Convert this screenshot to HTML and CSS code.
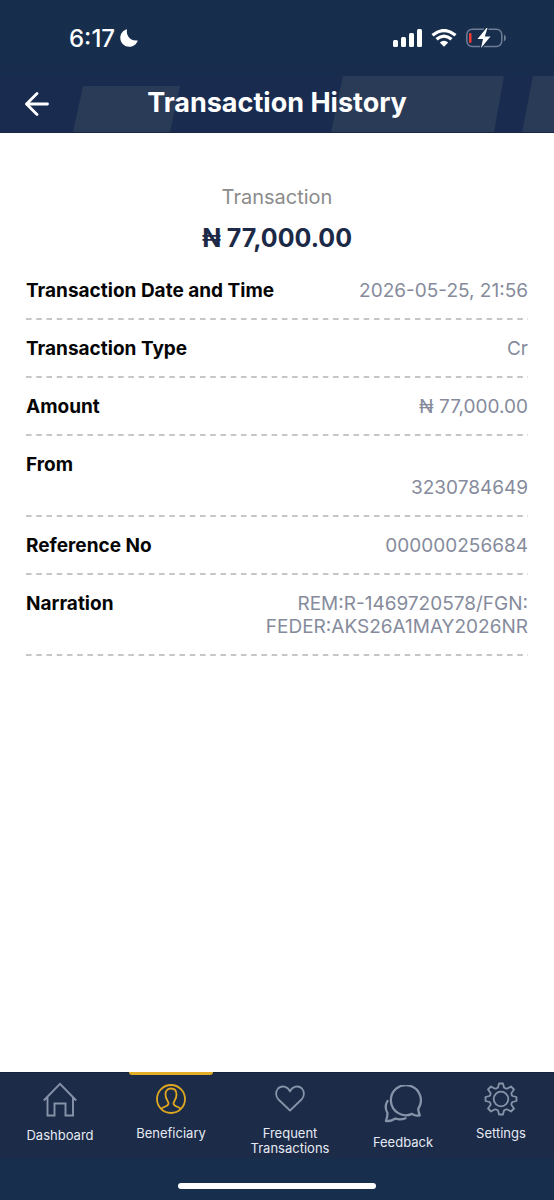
FILE: index.html
```html
<!DOCTYPE html>
<html lang="en">
<head>
<meta charset="utf-8">
<meta name="viewport" content="width=device-width, initial-scale=1">
<title>Transaction History</title>
<link rel="stylesheet" href="styles.css">
</head>
<body>
<div class="status">
  <div class="clock">
    <span>6:17</span>
    <svg width="18" height="18" viewBox="0 0 18 18" aria-hidden="true"><path fill="#fff" d="M7 .3C6 5.8 9.200 12.500 17.800 11.500C16.500 15.300 13.500 17.800 9.500 17.800C4.500 17.800.3 14 .3 9C.3 4.800 3 1.300 7 .3Z"/></svg>
  </div>
  <div class="signals">
    <svg width="29" height="18" viewBox="0 0 29 18" fill="#fff" aria-hidden="true"><rect y="11" width="5" height="7" rx="1.500"/><rect x="8" y="8" width="5" height="10" rx="1.500"/><rect x="16" y="4" width="5" height="14" rx="1.500"/><rect x="24" width="5" height="18" rx="1.500"/></svg>
    <svg width="26" height="18" viewBox="0 0 26 18" fill="none" stroke="#fff" stroke-width="3.200" aria-hidden="true"><path d="M1.500 6.300Q13-3.300 24.500 6.300M5.500 10.300Q13 3.800 20.500 10.300"/><path fill="#fff" stroke="none" d="M8.800 13.500Q13 10.200 17.200 13.500L13 17.700Z"/></svg>
    <svg width="40" height="20" viewBox="0 0 40 20" aria-hidden="true"><rect x=".8" y="1.200" width="35" height="17.400" rx="5.500" fill="none" stroke="#6f7e95" stroke-width="1.500"/><path d="M38 6.500q2 1 2 3.500t-2 3.500z" fill="#6f7e95"/><rect x="3" y="5" width="2.500" height="10" rx="1" fill="#ef3b36"/><path d="M20.500 0L11.500 11H17L15 20L24.500 8.500H18.800L21.500 0Z" fill="#fff" stroke="#172e4d" stroke-width="2.500" paint-order="stroke"/></svg>
  </div>
</div>
<header class="header">
  <svg class="pattern" viewBox="0 0 554 56" preserveAspectRatio="none" aria-hidden="true"><path fill="#2a3b58" d="M83 10H180L170 56H73ZM343 0H504L494 56H331ZM533 0H554V56H522Z"/></svg>
  <button class="back" aria-label="Back"><svg width="24" height="24" viewBox="0 0 24 24" fill="none" stroke="#fff" stroke-width="2.800" stroke-linecap="round" stroke-linejoin="round" aria-hidden="true"><path d="M22.500 12H1.500M12 1.500L1.500 12L12 22.500"/></svg></button>
  <h1 class="title">Transaction History</h1>
</header>
<main class="main">
  <p class="caption">Transaction</p>
  <p class="total">₦ 77,000.00</p>
  <dl class="details">
    <div class="row"><dt>Transaction Date and Time</dt><dd>2026-05-25, 21:56</dd></div>
    <div class="row"><dt>Transaction Type</dt><dd>Cr</dd></div>
    <div class="row"><dt>Amount</dt><dd>₦ 77,000.00</dd></div>
    <div class="row"><dt>From</dt><dd><br>3230784649</dd></div>
    <div class="row"><dt>Reference No</dt><dd>000000256684</dd></div>
    <div class="row"><dt>Narration</dt><dd>REM:R-1469720578/FGN:<br>FEDER:AKS26A1MAY2026NR</dd></div>
  </dl>
</main>
<footer class="footer">
  <nav class="tabs">
    <a class="tab" href="#dashboard"><svg width="34" height="36" viewBox="0 0 34 36" fill="none" stroke="#8693a8" stroke-width="1.900" aria-hidden="true"><path d="M.8 18.500L17 1.800L33.200 18.500M4.500 15V33.500H11.500V21.500H22.500V33.500H30V15"/></svg><span>Dashboard</span></a>
    <a class="tab active" href="#beneficiary" aria-current="page"><svg width="30" height="34" viewBox="0 0 30 34" fill="none" stroke="#e0a821" stroke-width="1.800" aria-hidden="true"><circle cx="15" cy="17" r="14"/><path d="M5 27C7 24.500 12.500 24.500 12.500 21.500C12.500 19 9.500 18 9.500 12.500C9.500 8.500 11.500 6.500 15 6.500S20.500 8.500 20.500 12.500C20.500 18 17.500 19 17.500 21.500C17.500 24.500 23 24.500 25 27"/></svg><span>Beneficiary</span></a>
    <a class="tab" href="#frequent"><svg width="30" height="34" viewBox="0 0 30 34" fill="none" stroke="#8693a8" stroke-width="1.800" stroke-linejoin="round" aria-hidden="true"><path d="M15 28.500L3.500 17.500C.5 14.500.3 9.500 3 6.500C6.500 3.200 12.500 4 15 9.500C17.500 4 23.500 3.200 27 6.500C29.700 9.500 29.500 14.500 26.500 17.500Z"/></svg><span>Frequent<br>Transactions</span></a>
    <a class="tab large" href="#feedback"><svg width="38" height="38" viewBox="0 0 38 38" fill="none" stroke="#8693a8" stroke-width="2.300" stroke-linecap="round" stroke-linejoin="round" aria-hidden="true"><path d="M34.300 23.600A15 15 0 1 0 28 28.900C30.500 30.500 33 31 35.800 30.300C35.300 28.500 34 26 34.300 23.600ZM3.500 16C1 20 1.200 24 3.500 28Q3.500 32 2 36Q7 36.500 11.500 33.500Q16 35.500 21.500 33.200"/></svg><span>Feedback</span></a>
    <a class="tab" href="#settings"><svg width="34" height="34" viewBox="0 0 34 34" fill="none" stroke="#8693a8" stroke-width="1.800" stroke-linejoin="round" aria-hidden="true"><circle cx="17" cy="17" r="7.300"/><path d="M15 1.500H19L20 5.500Q22 7 23.500 6.500L27 4.500L30 7.500L27.500 11Q27 12.500 28.500 14L32.500 15V19L28.500 20Q27 21.500 27.500 23L30 26.500L27 29.500L23.500 27.500Q22 27 20 28.500L19 32.500H15L14 28.500Q12 27 10.500 27.500L7 29.500L4 26.500L6.500 23Q7 21.500 5.500 20L1.500 19V15L5.500 14Q7 12.500 6.500 11L4 7.500L7 4.500L10.500 6.500Q12 7 14 5.500Z"/></svg><span>Settings</span></a>
  </nav>
  <div class="home"></div>
</footer>
</body>
</html>
```
FILE: styles.css
```css
* { box-sizing: border-box; }

body {
  margin: 0;
  min-height: 100vh;
  display: flex;
  flex-direction: column;
  background: #fff;
  font-family: Inter, "Liberation Sans", sans-serif;
}

.status {
  display: flex;
  justify-content: space-between;
  padding: 26px 48px 26px 69px;
  background: linear-gradient(#162e4c, #182d4e);
}

.clock, .signals {
  display: flex;
  align-items: center;
  height: 24px;
}

.clock {
  gap: 5px;
  color: #fff;
  font-size: 24px;
  font-weight: 500;
}

.signals { gap: 9px; }

.header {
  position: relative;
  display: grid;
  grid-template-columns: 49px 1fr 49px;
  align-items: center;
  height: 57px;
  background: #192c4f;
  border-bottom: 1px solid #1b2449;
}

.pattern {
  position: absolute;
  inset: 0;
  width: 100%;
  height: 100%;
}

.back {
  position: relative;
  display: flex;
  justify-content: flex-end;
  padding: 0;
  border: 0;
  background: none;
}

.title {
  position: relative;
  margin: 0;
  padding-bottom: 2px;
  color: #fff;
  font-size: 27px;
  font-weight: 700;
  line-height: 32px;
  text-align: center;
}

.main {
  flex: 1;
  padding: 52px 26px 24px;
}

.caption {
  margin: 0;
  color: #8b8b8b;
  font-size: 20px;
  line-height: 24px;
  text-align: center;
}

.total {
  margin: 12px 0 0;
  color: #1c2947;
  font-size: 25px;
  font-weight: 700;
  line-height: 34px;
  text-align: center;
}

.details { margin: 7px 0 0; }

.row {
  display: flex;
  justify-content: space-between;
  gap: 16px;
  padding: 17px 0 18px;
  font-size: 19px;
  line-height: 23px;
  background: linear-gradient(90deg, #c6c6c6 50%, transparent 50%) left bottom / calc(100% / 49) 2px repeat-x;
}

.row dt {
  color: #050505;
  font-weight: 700;
}

.row dd {
  margin: 0;
  color: #868b9c;
  text-align: right;
}

.footer { background: #172e4c; }

.tabs {
  display: grid;
  grid-template-columns: 120fr 102fr 136fr 90fr 106fr;
  min-height: 86px;
  background: #1c2b47;
  border-top: 1px solid #17233d;
}

.tab {
  position: relative;
  display: flex;
  flex-direction: column;
  align-items: center;
  gap: 10px;
  padding-top: 9px;
  color: #e5eaf4;
  font-size: 13px;
  line-height: 15px;
  text-align: center;
  text-decoration: none;
}

.large {
  gap: 12px;
  padding-top: 12px;
}

.active::before {
  content: "";
  position: absolute;
  top: -1px;
  left: 9px;
  right: 9px;
  height: 3px;
  border-radius: 0 0 3px 3px;
  background: #e2ae28;
}

.home {
  width: 198px;
  height: 6px;
  margin: 25px auto 11px;
  border-radius: 3px;
  background: #fff;
}
```
